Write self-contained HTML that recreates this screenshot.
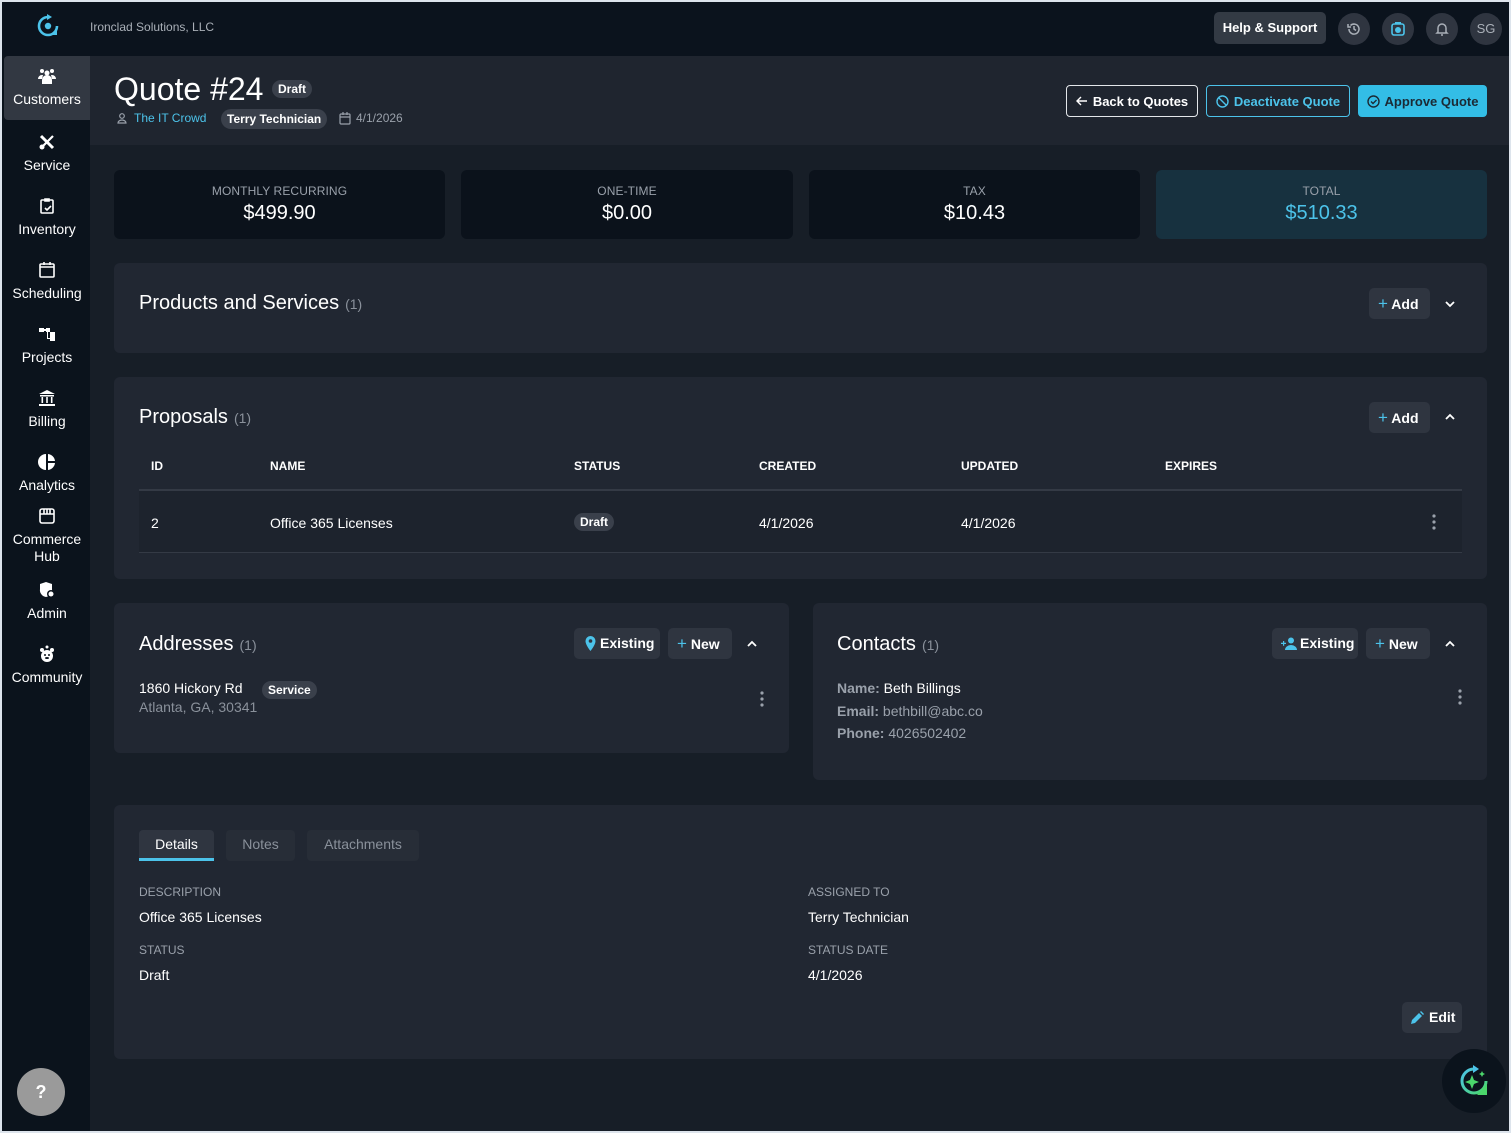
<!DOCTYPE html>
<html><head><meta charset="utf-8">
<style>
*{box-sizing:border-box;margin:0;padding:0}
body{width:1511px;height:1133px;background:#dde4ec;font-family:"Liberation Sans",sans-serif;overflow:hidden;position:relative;color:#fff}
.a{position:absolute}
#app{left:2px;top:2px;width:1507px;height:1129px;background:#171e27;overflow:hidden}
.top{left:0;top:0;width:1507px;height:54px;background:#0b131d}
.side{left:0;top:54px;width:88px;height:1075px;background:#0b131c}
.nav{position:absolute;left:2px;width:86px;text-align:center;font-size:14px;color:#fff;line-height:17px}
.nav svg{display:block;margin:0 auto 6px}
.card{position:absolute;background:#212732;border-radius:6px}
.stat{position:absolute;top:168px;height:69px;background:#0b121b;border-radius:6px;text-align:center}
.stat .l{font-size:12px;color:#9aa1ab;margin-top:14px;letter-spacing:.1px}
.stat .v{font-size:20px;margin-top:4px}
.h{position:absolute;font-size:20px;color:#fff}
.h span{font-size:14px;color:#8a919b;margin-left:6px}
.btn{position:absolute;height:31px;background:#2f3540;border-radius:5px;font-size:14px;font-weight:bold;line-height:31px;padding:0 9px;color:#fff;white-space:nowrap}
.pill{display:inline-block;background:#3a404b;border-radius:9px;font-size:12px;font-weight:bold;padding:2px 6px;line-height:14px}
.th{position:absolute;top:457px;font-size:12px;font-weight:bold;color:#fff}
.td{position:absolute;top:513px;font-size:14px}
.lbl{position:absolute;font-size:12px;color:#9aa1ab}
.val{position:absolute;font-size:14px}
.chev{position:absolute;width:10px;height:10px}
.ib{position:absolute;top:11px;width:32px;height:32px;border-radius:50%;background:#2f3540}
.hb{position:absolute;top:83px;height:32px;border-radius:4px;font-size:13px;font-weight:bold;display:flex;align-items:center;justify-content:center;gap:5px}
</style></head><body>
<div id="app" class="a">
<div class="a top">
  <svg class="a" style="left:34px;top:12px" width="24" height="24" viewBox="0 0 24 24"><path d="M12 3a9 9 0 1 0 9 9" fill="none" stroke="#4cc3ea" stroke-width="2.6"/><path d="M11 0l5 3-5 3z" fill="#4cc3ea"/><circle cx="12" cy="12" r="3.2" fill="#4cc3ea"/><path d="M14 21h7v-7z" fill="#4cc3ea"/></svg>
  <div class="a" style="left:88px;top:18px;font-size:12px;color:#aab0b8">Ironclad Solutions, LLC</div>
  <div class="a" style="left:1212px;top:10px;width:112px;height:32px;background:#333a44;border-radius:5px;font-size:13px;font-weight:bold;line-height:32px;text-align:center">Help &amp; Support</div>
  <div class="ib" style="left:1336px"><svg style="margin:8px" width="16" height="16" viewBox="0 0 16 16" fill="none" stroke="#aab0b8" stroke-width="1.5"><path d="M3 8a5 5 0 1 0 1.5-3.5"/><path d="M2 3v3h3"/><path d="M8 5v3l2 1.5"/></svg></div>
  <div class="ib" style="left:1380px"><svg style="margin:8px" width="16" height="16" viewBox="0 0 16 16"><rect x="2" y="3" width="12" height="11" rx="2" fill="none" stroke="#4cc3ea" stroke-width="1.6"/><rect x="5" y="1" width="6" height="2" fill="#4cc3ea"/><circle cx="8" cy="9" r="3" fill="#4cc3ea"/></svg></div>
  <div class="ib" style="left:1424px"><svg style="margin:8px" width="16" height="16" viewBox="0 0 16 16" fill="none" stroke="#aab0b8" stroke-width="1.5"><path d="M4 11V7a4 4 0 0 1 8 0v4l1 1H3z"/><path d="M7 14h2"/></svg></div>
  <div class="ib" style="left:1468px;font-size:13px;color:#aab0b8;text-align:center;line-height:32px">SG</div>
</div>
<div class="a side">
  <div class="nav" style="top:0;height:64px;background:#323842;border-radius:4px 0 0 4px;padding-top:11px"><svg width="18" height="18" viewBox="0 0 18 18" fill="#fff"><circle cx="9" cy="6" r="2.5"/><circle cx="4" cy="4" r="2"/><circle cx="14" cy="4" r="2"/><path d="M4 17v-4a5 5 0 0 1 10 0v4z"/><path d="M0 12a4 4 0 0 1 4-4h1l-1 4zM18 12a4 4 0 0 0-4-4h-1l1 4z"/></svg>Customers</div>
  <div class="nav" style="top:77px"><svg width="18" height="18" viewBox="0 0 18 18" fill="none"><path d="M3 3l12 12" stroke="#fff" stroke-width="3"/><path d="M15 3L3 15" stroke="#fff" stroke-width="2.2"/><circle cx="4" cy="14" r="2.5" fill="#fff"/></svg>Service</div>
  <div class="nav" style="top:141px"><svg width="18" height="18" viewBox="0 0 18 18" stroke="#fff" stroke-width="1.6" fill="none"><rect x="3" y="3" width="12" height="13" rx="1"/><path d="M7 2h4v2H7zM7 11l2 2 4-4"/></svg>Inventory</div>
  <div class="nav" style="top:205px"><svg width="18" height="18" viewBox="0 0 18 18" stroke="#fff" stroke-width="1.6" fill="none"><rect x="2" y="3" width="14" height="13" rx="1"/><path d="M2 6h14M6 1v3M12 1v3"/></svg>Scheduling</div>
  <div class="nav" style="top:269px"><svg width="18" height="18" viewBox="0 0 18 18" fill="#fff"><rect x="1" y="3" width="5" height="4"/><rect x="8" y="3" width="4" height="4"/><rect x="12" y="7" width="5" height="9"/><path d="M6 4h2v2H6zM9 7h1v6h2v1H9z"/></svg>Projects</div>
  <div class="nav" style="top:333px"><svg width="18" height="18" viewBox="0 0 18 18" fill="#fff"><path d="M9 1l8 4H1z"/><rect x="2" y="6" width="14" height="1.5"/><rect x="3.5" y="8" width="1.6" height="6"/><rect x="8.2" y="8" width="1.6" height="6"/><rect x="12.9" y="8" width="1.6" height="6"/><rect x="1" y="15" width="16" height="2"/></svg>Billing</div>
  <div class="nav" style="top:397px"><svg width="18" height="18" viewBox="0 0 18 18" fill="#fff"><path d="M8 1a8 8 0 0 0 0 16z"/><path d="M10 1a8 8 0 0 1 7 7h-7z"/><path d="M10 10h7a8 8 0 0 1-7 7z"/></svg>Analytics</div>
  <div class="nav" style="top:451px"><svg width="18" height="18" viewBox="0 0 18 18" stroke="#fff" stroke-width="1.6" fill="none"><rect x="2" y="2" width="14" height="14" rx="2"/><path d="M2 7h14M6 2v5M9 2v5M12 2v5"/></svg>Commerce<br>Hub</div>
  <div class="nav" style="top:525px"><svg width="18" height="18" viewBox="0 0 18 18" fill="#fff"><path d="M8 1l6 2v5a7 7 0 0 1-6 8 7 7 0 0 1-6-8V3z"/><circle cx="13" cy="13" r="4" fill="#0b131c"/><circle cx="13" cy="13" r="2.5"/></svg>Admin</div>
  <div class="nav" style="top:589px"><svg width="18" height="18" viewBox="0 0 18 18" fill="#fff"><circle cx="9" cy="11" r="6"/><circle cx="4" cy="5" r="2"/><circle cx="14" cy="5" r="2"/><circle cx="9" cy="2" r="1.5"/><circle cx="7" cy="10" r="1" fill="#0b131c"/><circle cx="11" cy="10" r="1" fill="#0b131c"/><ellipse cx="9" cy="13" rx="2" ry="1" fill="#0b131c"/></svg>Community</div>
  <div class="a" style="left:15px;top:1012px;width:48px;height:48px;border-radius:50%;background:#9a9a9a;text-align:center;line-height:48px;font-weight:bold;font-size:18px">?</div>
</div>
<div class="a" style="left:88px;top:54px;width:1419px;height:89px;background:#1f252f"></div>
<div class="a" style="left:112px;top:68px;font-size:32px;line-height:38px">Quote #24</div>
<div class="a" style="left:270px;top:78px"><span class="pill">Draft</span></div>
<svg class="a" style="left:114px;top:110px" width="12" height="12" viewBox="0 0 12 12" fill="none" stroke="#9aa1ab" stroke-width="1.2"><circle cx="6" cy="4" r="2.3"/><path d="M2 11a4 3 0 0 1 8 0z"/></svg>
<div class="a" style="left:132px;top:109px;font-size:12px;color:#4cc3ea">The IT Crowd</div>
<div class="a" style="left:219px;top:107px"><span class="pill" style="border-radius:10px;padding:3px 6px">Terry Technician</span></div>
<svg class="a" style="left:337px;top:110px" width="12" height="13" viewBox="0 0 12 13" fill="none" stroke="#9aa1ab" stroke-width="1.2"><rect x="1" y="2" width="10" height="10" rx="1"/><path d="M1 5h10M4 0v3M8 0v3"/></svg>
<div class="a" style="left:354px;top:109px;font-size:12px;color:#9aa1ab">4/1/2026</div>
<div class="hb" style="left:1064px;width:132px;border:1px solid #e4e7eb"><svg width="12" height="12" viewBox="0 0 12 12" fill="none" stroke="#fff" stroke-width="1.4"><path d="M11 6H1M5 2L1 6l4 4"/></svg>Back to Quotes</div>
<div class="hb" style="left:1204px;width:144px;border:1px solid #4cc3ea;color:#4cc3ea"><svg width="13" height="13" viewBox="0 0 13 13" fill="none" stroke="#4cc3ea" stroke-width="1.4"><circle cx="6.5" cy="6.5" r="5.5"/><path d="M2.6 2.6l7.8 7.8"/></svg>Deactivate Quote</div>
<div class="hb" style="left:1356px;width:129px;background:#33bde6;color:#1b2a35"><svg width="13" height="13" viewBox="0 0 13 13" fill="none" stroke="#1b2a35" stroke-width="1.4"><circle cx="6.5" cy="6.5" r="5.5"/><path d="M4 6.5l2 2 3.5-3.5"/></svg>Approve Quote</div>
<div class="stat" style="left:112px;width:331px"><div class="l">MONTHLY RECURRING</div><div class="v">$499.90</div></div>
<div class="stat" style="left:459px;width:332px"><div class="l">ONE-TIME</div><div class="v">$0.00</div></div>
<div class="stat" style="left:807px;width:331px"><div class="l">TAX</div><div class="v">$10.43</div></div>
<div class="stat" style="left:1154px;width:331px;background:#17313f"><div class="l">TOTAL</div><div class="v" style="color:#4cc3ea">$510.33</div></div>
<div class="card" style="left:112px;top:261px;width:1373px;height:90px"></div>
<div class="h" style="left:137px;top:290px">Products and Services<span>(1)</span></div>
<div class="btn" style="left:1367px;top:286px;width:61px"><span style="color:#4cc3ea;font-weight:normal;font-size:17px">+</span> Add</div>
<svg class="chev" style="left:1443px;top:297px" viewBox="0 0 10 10" fill="none" stroke="#fff" stroke-width="1.8"><path d="M1 3l4 4 4-4"/></svg>
<div class="card" style="left:112px;top:375px;width:1373px;height:202px"></div>
<div class="h" style="left:137px;top:404px">Proposals<span>(1)</span></div>
<div class="btn" style="left:1367px;top:400px;width:61px"><span style="color:#4cc3ea;font-weight:normal;font-size:17px">+</span> Add</div>
<svg class="chev" style="left:1443px;top:410px" viewBox="0 0 10 10" fill="none" stroke="#fff" stroke-width="1.8"><path d="M1 7l4-4 4 4"/></svg>
<div class="th" style="left:149px">ID</div><div class="th" style="left:268px">NAME</div><div class="th" style="left:572px">STATUS</div><div class="th" style="left:757px">CREATED</div><div class="th" style="left:959px">UPDATED</div><div class="th" style="left:1163px">EXPIRES</div>
<div class="a" style="left:137px;top:487px;width:1323px;height:64px;background:#1d232d;border-top:2px solid #343a45;border-bottom:1px solid #343a45"></div>
<div class="td" style="left:149px">2</div><div class="td" style="left:268px">Office 365 Licenses</div>
<div class="a" style="left:572px;top:511px"><span class="pill">Draft</span></div>
<div class="td" style="left:757px">4/1/2026</div><div class="td" style="left:959px">4/1/2026</div>
<svg class="a" style="left:1429px;top:511px" width="6" height="18" viewBox="0 0 6 18" fill="#9aa1ab"><circle cx="3" cy="3" r="1.6"/><circle cx="3" cy="9" r="1.6"/><circle cx="3" cy="15" r="1.6"/></svg>
<div class="card" style="left:112px;top:601px;width:675px;height:150px"></div>
<div class="h" style="left:137px;top:631px">Addresses<span>(1)</span></div>
<div class="btn" style="left:572px;top:626px;padding-left:26px;width:86px">Existing</div>
<svg class="a" style="left:583px;top:634px" width="11" height="15" viewBox="0 0 11 15"><path d="M5.5 0a5 5 0 0 1 5 5c0 4-5 10-5 10S.5 9 .5 5a5 5 0 0 1 5-5z" fill="#4cc3ea"/><circle cx="5.5" cy="5" r="1.8" fill="#2f3540"/></svg>
<div class="btn" style="left:666px;top:626px;width:64px"><span style="color:#4cc3ea;font-weight:normal;font-size:17px">+</span> New</div>
<svg class="chev" style="left:745px;top:637px" viewBox="0 0 10 10" fill="none" stroke="#fff" stroke-width="1.8"><path d="M1 7l4-4 4 4"/></svg>
<div class="val" style="left:137px;top:678px">1860 Hickory Rd</div>
<div class="a" style="left:260px;top:679px"><span class="pill">Service</span></div>
<div class="val" style="left:137px;top:697px;color:#8a919b">Atlanta, GA, 30341</div>
<svg class="a" style="left:757px;top:688px" width="6" height="18" viewBox="0 0 6 18" fill="#9aa1ab"><circle cx="3" cy="3" r="1.6"/><circle cx="3" cy="9" r="1.6"/><circle cx="3" cy="15" r="1.6"/></svg>
<div class="card" style="left:811px;top:601px;width:674px;height:177px"></div>
<div class="h" style="left:835px;top:631px">Contacts<span>(1)</span></div>
<div class="btn" style="left:1270px;top:626px;padding-left:28px;width:86px">Existing</div>
<svg class="a" style="left:1279px;top:635px" width="16" height="13" viewBox="0 0 16 13" fill="#4cc3ea"><circle cx="10" cy="3.5" r="3"/><path d="M4 13a6 5 0 0 1 12 0z"/><path d="M2 4h1.2v1.8H5V7H3.2v1.8H2V7H0V5.8h2z"/></svg>
<div class="btn" style="left:1364px;top:626px;width:64px"><span style="color:#4cc3ea;font-weight:normal;font-size:17px">+</span> New</div>
<svg class="chev" style="left:1443px;top:637px" viewBox="0 0 10 10" fill="none" stroke="#fff" stroke-width="1.8"><path d="M1 7l4-4 4 4"/></svg>
<div class="val" style="left:835px;top:678px"><b style="color:#9aa1ab">Name:</b> Beth Billings</div>
<div class="val" style="left:835px;top:701px;color:#9aa1ab"><b>Email:</b> bethbill@abc.co</div>
<div class="val" style="left:835px;top:723px;color:#9aa1ab"><b>Phone:</b> 4026502402</div>
<svg class="a" style="left:1455px;top:686px" width="6" height="18" viewBox="0 0 6 18" fill="#9aa1ab"><circle cx="3" cy="3" r="1.6"/><circle cx="3" cy="9" r="1.6"/><circle cx="3" cy="15" r="1.6"/></svg>
<div class="card" style="left:112px;top:803px;width:1373px;height:254px"></div>
<div class="a" style="left:137px;top:828px;width:75px;height:31px;background:#2f3540;border-radius:4px 4px 0 0;border-bottom:3px solid #4cc3ea;font-size:14px;text-align:center;line-height:29px">Details</div>
<div class="a" style="left:224px;top:828px;width:69px;height:31px;background:#272d37;border-radius:4px;font-size:14px;color:#8a919b;text-align:center;line-height:29px">Notes</div>
<div class="a" style="left:305px;top:828px;width:112px;height:31px;background:#272d37;border-radius:4px;font-size:14px;color:#8a919b;text-align:center;line-height:29px">Attachments</div>
<div class="lbl" style="left:137px;top:883px">DESCRIPTION</div>
<div class="val" style="left:137px;top:907px">Office 365 Licenses</div>
<div class="lbl" style="left:137px;top:941px">STATUS</div>
<div class="val" style="left:137px;top:965px">Draft</div>
<div class="lbl" style="left:806px;top:883px">ASSIGNED TO</div>
<div class="val" style="left:806px;top:907px">Terry Technician</div>
<div class="lbl" style="left:806px;top:941px">STATUS DATE</div>
<div class="val" style="left:806px;top:965px">4/1/2026</div>
<div class="btn" style="left:1400px;top:1000px;padding-left:27px;width:60px">Edit</div>
<svg class="a" style="left:1409px;top:1009px" width="13" height="13" viewBox="0 0 13 13" fill="#4cc3ea"><path d="M0 13l1-4 7-7 3 3-7 7z"/><path d="M9 1l1-1 3 3-1 1z"/></svg>
<div class="a" style="left:1440px;top:1047px;width:64px;height:64px;border-radius:50%;background:#0b131c"></div>
<svg class="a" style="left:1456px;top:1063px" width="32" height="32" viewBox="0 0 32 32"><defs><linearGradient id="g" x1="0" y1="0" x2="1" y2="1"><stop offset="0" stop-color="#4cc3ea"/><stop offset="1" stop-color="#4bd66b"/></linearGradient></defs><path d="M16 4a12 12 0 1 0 12 12" fill="none" stroke="url(#g)" stroke-width="3"/><path d="M15 0l6 4-6 4z" fill="#4cc3ea"/><path d="M14 10l2 5 5 2-5 2-2 5-2-5-5-2 5-2z" fill="#4bd66b"/><path d="M24 6l1 2 2 1-2 1-1 2-1-2-2-1 2-1z" fill="#4bd66b"/><path d="M19 30h10V19z" fill="#4bd66b"/></svg>
</div>
</body></html>
